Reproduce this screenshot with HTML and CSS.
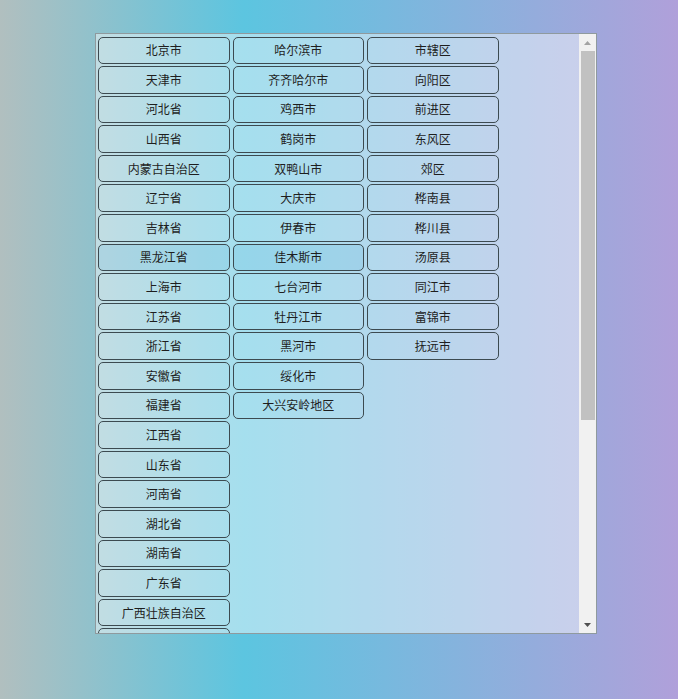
FILE: index.html
```html
<!DOCTYPE html>
<html lang="zh-CN">
<head>
<meta charset="utf-8">
<title>地区选择</title>
<link rel="stylesheet" href="styles.css">
</head>
<body>
<div class="picker">
  <div class="lists">
    <div class="col">
      <button class="item">北京市</button>
      <button class="item">天津市</button>
      <button class="item">河北省</button>
      <button class="item">山西省</button>
      <button class="item">内蒙古自治区</button>
      <button class="item">辽宁省</button>
      <button class="item">吉林省</button>
      <button class="item active">黑龙江省</button>
      <button class="item">上海市</button>
      <button class="item">江苏省</button>
      <button class="item">浙江省</button>
      <button class="item">安徽省</button>
      <button class="item">福建省</button>
      <button class="item">江西省</button>
      <button class="item">山东省</button>
      <button class="item">河南省</button>
      <button class="item">湖北省</button>
      <button class="item">湖南省</button>
      <button class="item">广东省</button>
      <button class="item">广西壮族自治区</button>
      <button class="item">海南省</button>
      <button class="item">重庆市</button>
      <button class="item">四川省</button>
      <button class="item">贵州省</button>
      <button class="item">云南省</button>
      <button class="item">西藏自治区</button>
      <button class="item">陕西省</button>
      <button class="item">甘肃省</button>
      <button class="item">青海省</button>
      <button class="item">宁夏回族自治区</button>
      <button class="item">新疆维吾尔自治区</button>
    </div>
    <div class="col">
      <button class="item">哈尔滨市</button>
      <button class="item">齐齐哈尔市</button>
      <button class="item">鸡西市</button>
      <button class="item">鹤岗市</button>
      <button class="item">双鸭山市</button>
      <button class="item">大庆市</button>
      <button class="item">伊春市</button>
      <button class="item active">佳木斯市</button>
      <button class="item">七台河市</button>
      <button class="item">牡丹江市</button>
      <button class="item">黑河市</button>
      <button class="item">绥化市</button>
      <button class="item">大兴安岭地区</button>
    </div>
    <div class="col">
      <button class="item">市辖区</button>
      <button class="item">向阳区</button>
      <button class="item">前进区</button>
      <button class="item">东风区</button>
      <button class="item">郊区</button>
      <button class="item">桦南县</button>
      <button class="item">桦川县</button>
      <button class="item">汤原县</button>
      <button class="item">同江市</button>
      <button class="item">富锦市</button>
      <button class="item">抚远市</button>
    </div>
  </div>
  <div class="scrollbar" aria-hidden="true">
    <div class="sb-btn">
      <svg width="7" height="4" viewBox="0 0 7 4"><path d="M0 4 L3.5 0 L7 4 Z" fill="#a3a3a3"/></svg>
    </div>
    <div class="sb-track"><div class="sb-thumb"></div></div>
    <div class="sb-btn">
      <svg width="7" height="4" viewBox="0 0 7 4"><path d="M0 0 L7 0 L3.5 4 Z" fill="#505050"/></svg>
    </div>
  </div>
</div>
</body>
</html>
```
FILE: styles.css
```css
html, body {
  margin: 0;
  height: 100%;
}
body {
  background: linear-gradient(to right, #b1bfbf 0%, #5cc5e0 36%, #b0a0da 100%);
  font-family: "Noto Sans CJK SC", "Noto Sans", sans-serif;
  padding: 33px 0 0 95px;
  box-sizing: border-box;
}
.picker {
  width: 500px;
  height: 599px;
  border: 1px solid #8f9a9e;
  background: rgba(255, 255, 255, 0.45);
  display: flex;
  box-sizing: content-box;
}
.lists {
  flex: 1;
  overflow: hidden;
  display: flex;
  align-items: flex-start;
  gap: 3px;
  padding: 2.5px 0 0 2px;
}
.col {
  display: flex;
  flex-direction: column;
  gap: 2px;
  width: 131.5px;
  flex: none;
}
.item {
  height: 27.6px;
  width: 100%;
  margin: 0;
  padding: 0;
  border: 1px solid #3c4a50;
  border-radius: 5px;
  background: transparent;
  font-family: "Noto Sans CJK SC", "Noto Sans", sans-serif;
  font-size: 12px;
  color: #1e1e1e;
  text-align: center;
  line-height: 1;
  flex: none;
}
.item.active {
  background: rgba(60, 160, 210, 0.14);
}
.scrollbar {
  width: 17px;
  flex: none;
  background: #f1f1f1;
  display: flex;
  flex-direction: column;
}
.sb-btn {
  height: 17px;
  flex: none;
  display: flex;
  align-items: center;
  justify-content: center;
}
.sb-btn svg {
  display: block;
}
.sb-track {
  flex: 1;
  display: flex;
  justify-content: center;
}
.sb-thumb {
  width: 14px;
  height: 369px;
  background: #c1c1c1;
}
```
